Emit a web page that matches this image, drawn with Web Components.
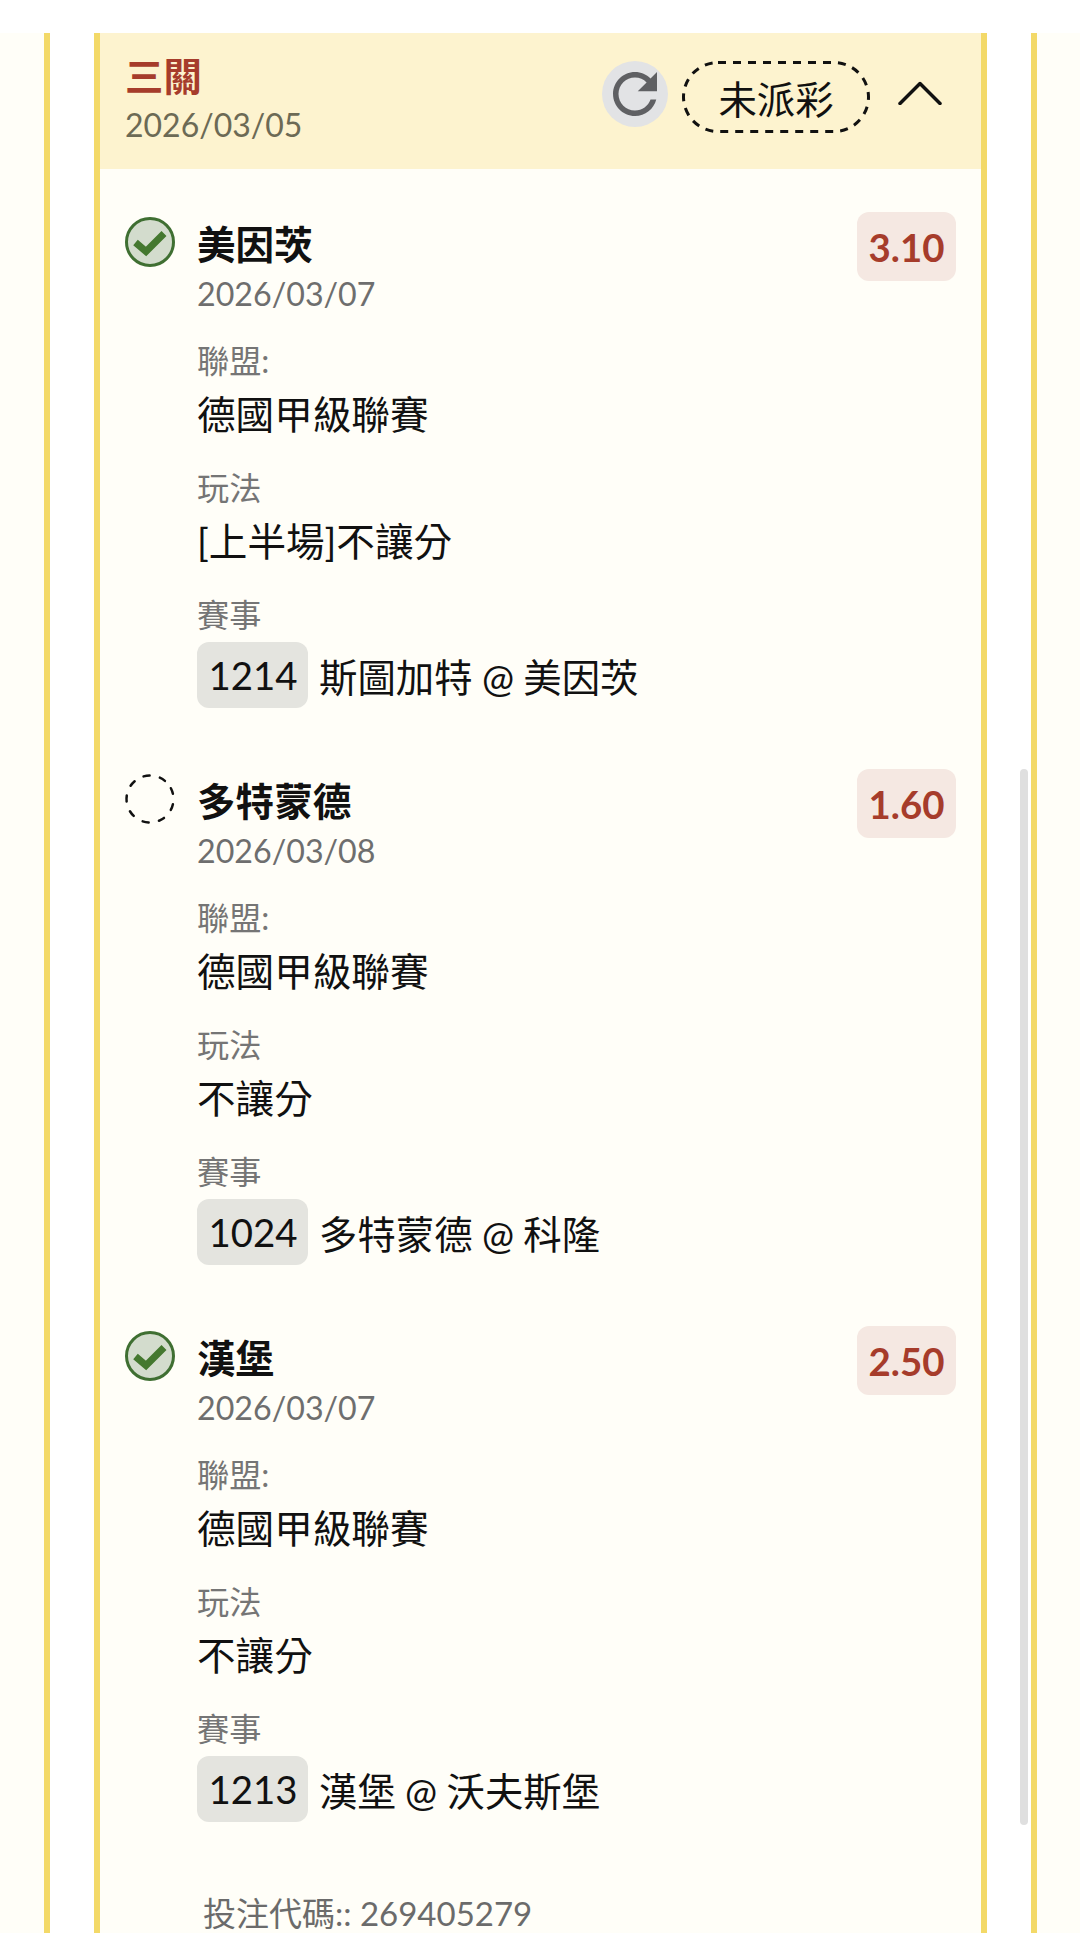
<!DOCTYPE html>
<html lang="zh-Hant"><head><meta charset="utf-8"><title>三關</title>
<style>
html,body{margin:0;padding:0;background:#fff;}
body{height:1933px;overflow:hidden;font-family:Lato,"Noto Sans CJK TC",sans-serif;color:#111;}
</style></head><body>
<bet-page>
  <bet-card title-text="三關" date="2026/03/05" code="投注代碼:: 269405279">
    <bet-leg name="美因茨" date="2026/03/07" odds="3.10" status="won" league="德國甲級聯賽" play="[上半場]不讓分" num="1214" match="斯圖加特 @ 美因茨"></bet-leg>
    <bet-leg name="多特蒙德" date="2026/03/08" odds="1.60" status="pending" league="德國甲級聯賽" play="不讓分" num="1024" match="多特蒙德 @ 科隆"></bet-leg>
    <bet-leg name="漢堡" date="2026/03/07" odds="2.50" status="won" league="德國甲級聯賽" play="不讓分" num="1213" match="漢堡 @ 沃夫斯堡"></bet-leg>
  </bet-card>
</bet-page>
<script>
customElements.define('bet-page',class extends HTMLElement{
  constructor(){super();this.attachShadow({mode:'open'}).innerHTML=`<style>
  :host{display:block;padding-top:33px;position:relative;height:1900px;}
  .bg{display:flex;height:100%;background:#fffef8;padding:0 43px 0 44px;}
  .outer{flex:1;background:#fff;border:solid #f3d968;border-width:0 6px;padding:0 44px;}
  .bar{position:absolute;left:1020px;top:769px;width:8px;height:1056px;border-radius:4px;background:#dfdfdf;}
  </style><div class="bg"><div class="outer"><slot></slot></div></div><div class="bar"></div>`;}
});
customElements.define('bet-card',class extends HTMLElement{
  connectedCallback(){const a=n=>this.getAttribute(n);
  this.attachShadow({mode:'open'}).innerHTML=`<style>
  :host{display:block;background:#fffef8;border:solid #f3d968;border-width:0 6px;height:100%;box-sizing:border-box;}
  header{height:136px;box-sizing:border-box;background:#fdf3cf;display:flex;align-items:flex-start;justify-content:space-between;padding:0 25px;}
  .t{font-size:38.400px;font-weight:700;line-height:46px;color:#a63c2b;margin-top:20px;}
  .d{font-size:32px;line-height:42px;color:#6c6a55;margin-top:5px;}
  .act{display:flex;align-items:flex-start;margin-top:28px;margin-right:14px;}
  .rf{width:66px;height:66px;border-radius:50%;background:#e2e3e5;display:block;}
  .pill{position:relative;margin-left:14px;width:188px;height:72px;display:flex;align-items:center;justify-content:center;font-size:38.400px;color:#111;}
  .pill svg{position:absolute;inset:0;}
  .chev{margin:20px 0 0 28px;width:44px;height:24px;display:block;}
  .list{padding:43px 0 0 25px;}
  .code{font-size:33px;line-height:44px;color:#6b6b6b;margin:8px 0 0 78px;}
  </style><header><div><div class="t">${a('title-text')}</div><div class="d">${a('date')}</div></div>
  <div class="act"><svg class="rf" viewBox="0 0 24 24"><path fill="#5f6063" d="M17.65 6.35C16.2 4.9 14.21 4 12 4c-4.42 0-7.99 3.58-7.99 8s3.57 8 7.99 8c3.73 0 6.84-2.55 7.73-6h-2.08c-.82 2.33-3.04 4-5.65 4-3.31 0-6-2.69-6-6s2.69-6 6-6c1.66 0 3.14.69 4.22 1.78L13 11h7V4l-2.35 2.35z"/></svg>
  <div class="pill"><svg width="188" height="72" viewBox="0 0 188 72"><rect x="1.500" y="1.500" width="185" height="69" rx="34.500" fill="none" stroke="#111" stroke-width="3" stroke-dasharray="8 7"/></svg><span>未派彩</span></div>
  <svg class="chev" viewBox="0 0 44 24"><path d="M2 22.500L22 2.500L42 22.500" fill="none" stroke="#111" stroke-width="3.500" stroke-linecap="round" stroke-linejoin="round"/></svg></div></header>
  <div class="list"><slot></slot><div class="code">${a('code')}</div></div>`;}
});
customElements.define('bet-leg',class extends HTMLElement{
  connectedCallback(){const a=n=>this.getAttribute(n);
  const icon=a('status')==='won'
   ?`<svg viewBox="0 0 50 50" width="50" height="50"><circle cx="25" cy="25" r="23.500" fill="#d3dccd" stroke="#3f6f32" stroke-width="3"/><path d="M10.500 25.500L21 34.500L39 16.500" fill="none" stroke="#44782f" stroke-width="7"/></svg>`
   :`<svg viewBox="0 0 50 50" width="50" height="50"><circle cx="25" cy="25" r="23.500" fill="none" stroke="#111" stroke-width="2.500" stroke-dasharray="6 10.400" stroke-linecap="round" transform="rotate(-27.300 25 25)"/></svg>`;
  this.attachShadow({mode:'open'}).innerHTML=`<style>
  :host{display:grid;grid-template-columns:72px 1fr auto;height:557px;box-sizing:border-box;padding-right:25px;}
  .ic{padding-top:5px;height:50px;}
  .ic svg{display:block;}
  .name{font-size:38.600px;font-weight:700;line-height:54px;color:#111;margin-top:5px;margin-bottom:1px;}
  .date{font-size:32.200px;line-height:44px;color:#6e6e6e;}
  .lb{font-size:32.200px;line-height:44px;color:#757575;margin-top:23px;}
  .v{font-size:38.600px;line-height:56px;color:#111;margin-top:3px;}
  .lb2{margin-top:24px;}
  .odds{width:99px;height:69px;background:#f5e8e2;border-radius:12px;color:#a63c2b;font-size:38.400px;font-weight:700;display:flex;align-items:center;justify-content:center;}
  .m{display:flex;align-items:center;font-size:38.400px;color:#111;margin-top:5px;word-spacing:-.5px;}
  .chip{width:111px;height:66px;background:#e4e4df;border-radius:12px;display:flex;align-items:center;justify-content:center;margin-right:11px;padding-left:1px;box-sizing:border-box;}
  </style><div class="ic">${icon}</div>
  <div><div class="name">${a('name')}</div><div class="date">${a('date')}</div>
  <div class="lb">聯盟:</div><div class="v">${a('league')}</div>
  <div class="lb lb2">玩法</div><div class="v">${a('play')}</div>
  <div class="lb lb2">賽事</div><div class="m"><span class="chip">${a('num')}</span><span>${a('match')}</span></div></div>
  <div class="odds">${a('odds')}</div>`;}
});
</script></body></html>
